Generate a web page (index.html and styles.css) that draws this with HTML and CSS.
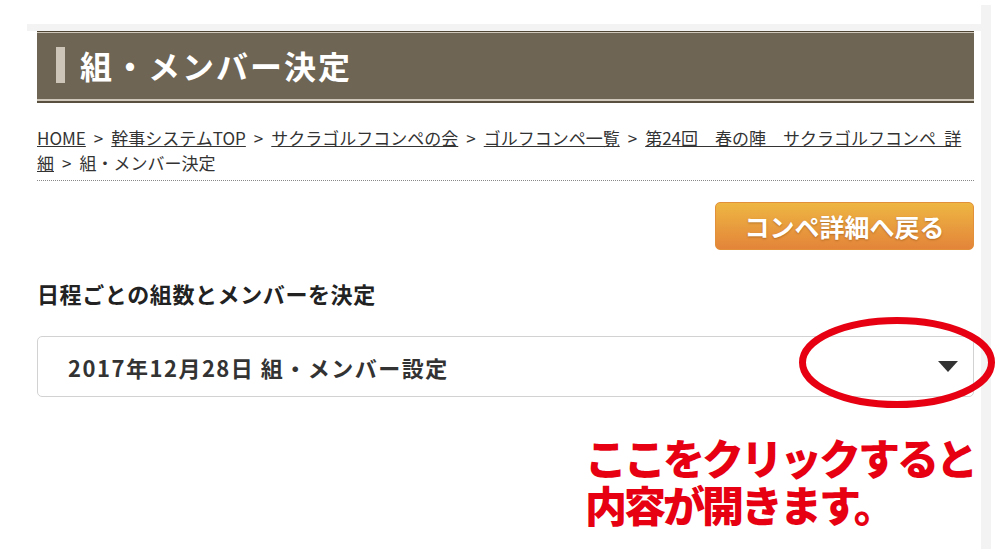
FILE: index.html
```html
<!DOCTYPE html>
<html lang="ja">
<head>
  <meta charset="UTF-8">
  <title>組・メンバー決定</title>
  <link rel="stylesheet" href="styles.css">
</head>
<body>
  <div class="screen">
    <div class="page">
      <h1 class="title-bar"><span class="title-mark"></span>組・メンバー決定</h1>

      <!-- breadcrumb -->
      <p class="crumbs"><a href="#">HOME</a><span class="sep">&gt;</span><a href="#">幹事システムTOP</a><span class="sep">&gt;</span><a href="#">サクラゴルフコンペの会</a><span class="sep">&gt;</span><a href="#">ゴルフコンペ一覧</a><span class="sep">&gt;</span><a href="#">第24回　春の陣　サクラゴルフコンペ 詳細</a><span class="sep">&gt;</span>組・メンバー決定</p>

      <div class="actions">
        <a class="back-btn" href="#">コンペ詳細へ戻る</a>
      </div>

      <h2 class="section-title">日程ごとの組数とメンバーを決定</h2>

      <div class="select-wrap">
        <div class="day-select">
          <span>2017年12月28日 組・メンバー設定</span>
          <span class="caret"></span>
        </div>
        <!-- annotation -->
        <svg class="callout-ring" width="196" height="91" viewBox="0 0 196 91">
          <ellipse cx="98" cy="45.5" rx="94.5" ry="42" fill="none" stroke="#e60012" stroke-width="7"/>
        </svg>
      </div>

      <p class="note">ここをクリックすると<br>内容が開きます。</p>
    </div>
    <div class="rail"></div>
  </div>
</body>
</html>
```

FILE: styles.css
```css
html, body {
  margin: 0;
  padding: 0;
  background: #fff;
}

body {
  font-family: "Noto Sans CJK JP", "Noto Sans", sans-serif;
  color: #333;
  overflow: hidden;
}

.screen {
  display: flex;
  padding-left: 27px;
  height: 549px;
}

.page {
  width: 954px;
  margin-top: 24px;
  border-top: 7px solid #f3f3f3;
  padding: 0 7px 0 10px;
  box-sizing: border-box;
}

.rail {
  width: 10px;
  margin-top: 5px;
  background: #f3f3f3;
}

/* Title bar */
.title-bar {
  display: flex;
  align-items: center;
  height: 72px;
  margin: 0;
  padding: 0 0 3px 19px;
  box-sizing: border-box;
  background: #6e6554;
  border-top: 1px solid #4f4535;
  border-bottom: 2px solid #5a503f;
  box-shadow: inset 0 1px 0 #cfc7b9, inset 0 -2px 0 #cfc7b9;
  color: #fff;
  font-size: 32px;
  font-weight: 700;
  letter-spacing: 2px;
}

.title-mark {
  width: 9px;
  height: 36px;
  margin-right: 15px;
  background: #cdc5b8;
}

/* Breadcrumb */
.crumbs {
  margin: 22px 0 0;
  padding-bottom: 5px;
  border-bottom: 1px dotted #888;
  font-size: 17px;
  line-height: 25px;
  word-spacing: 4.5px;
  color: #333;
}

.crumbs a {
  color: #333;
  text-decoration: underline;
}

.crumbs .sep {
  margin: 0 8px;
}

.actions {
  display: flex;
  justify-content: flex-end;
  margin-top: 21px;
}

.back-btn {
  display: flex;
  align-items: center;
  justify-content: center;
  width: 259px;
  height: 48px;
  box-sizing: border-box;
  border: 1px solid #e2913a;
  border-radius: 5px;
  background: linear-gradient(#eeb642, #e3843a);
  color: #fff;
  font-size: 25px;
  font-weight: 700;
  text-decoration: none;
  text-shadow: 0 1px 2px rgba(120, 60, 0, 0.45);
}

.section-title {
  margin: 28px 0 0;
  font-size: 22px;
  line-height: 30px;
  font-weight: 700;
  letter-spacing: 0.6px;
  color: #222;
}

/* Day select */
.select-wrap {
  position: relative;
  margin-top: 28px;
}

.day-select {
  display: flex;
  align-items: center;
  justify-content: space-between;
  height: 61px;
  box-sizing: border-box;
  padding: 0 15px 0 30px;
  border: 1px solid #d2d2d2;
  border-radius: 5px;
  font-size: 22px;
  font-weight: 700;
  letter-spacing: 1.5px;
  color: #333;
}

.caret {
  width: 0;
  height: 0;
  border-left: 10px solid transparent;
  border-right: 10px solid transparent;
  border-top: 11px solid #333;
}

.callout-ring {
  position: absolute;
  left: 762px;
  top: -19px;
  overflow: visible;
}

.note {
  margin: 36px 0 0;
  padding-left: 548px;
  font-size: 42px;
  line-height: 47px;
  font-weight: 900;
  letter-spacing: -3px;
  color: #e60012;
  white-space: nowrap;
}
```
